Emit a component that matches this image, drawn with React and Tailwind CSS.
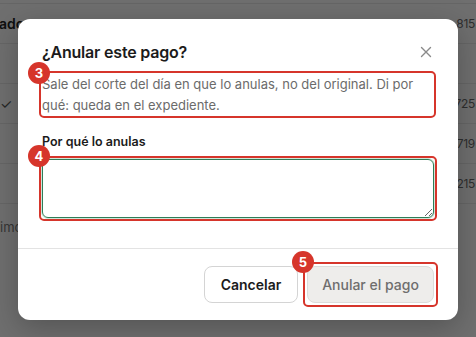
import React from "react";

const rows = [
  { left: "ado", right: "815", bold: true },
  { left: "", right: "" },
  { left: "✓", right: "725" },
  { left: "", right: "719" },
  { left: "", right: "215" },
];

const Badge = ({ n, className }) => (
  <span className={`absolute z-10 flex h-[22px] w-[22px] items-center justify-center rounded-full bg-[#d6352b] text-[13px] font-bold leading-none text-white ${className}`}>
    {n}
  </span>
);

const Mark = ({ n, children, box = "-inset-[3px]", badge = "-left-[14px] -top-[12px]" }) => (
  <div className="relative">
    {children}
    <div className={`pointer-events-none absolute ${box} rounded-[5px] border-2 border-[#d6352b]`} />
    <Badge n={n} className={badge} />
  </div>
);

export default function App() {
  return (
    <div className="relative h-[337px] w-[476px] overflow-hidden bg-[#f7f7f6] font-['Inter',sans-serif] text-[#1f1f1f]">
      {/* page behind the dialog */}
      <div className="flex flex-col pt-[3px]">
        <div className="h-0 border-t border-[#e2e2e2]" />
        {rows.map((r, i) => (
          <div key={i} className="flex h-10 items-center justify-between border-b border-[#e2e2e2] text-[14px]">
            <span className={`${r.bold ? "font-semibold text-[#222] -ml-px" : "text-[#555] ml-0"}`}>{r.left}</span>
            <span className="pr-px text-[12px] tracking-[-0.3px] text-[#666]">{r.right}</span>
          </div>
        ))}
        <div className="pt-[14px] text-[13px] text-[#777]">imo</div>
      </div>

      <div className="absolute inset-0 bg-[#000]/55" />

      {/* dialog */}
      <div className="absolute left-[18px] top-[19px] flex w-[440px] flex-col rounded-xl bg-white shadow-[0_8px_30px_rgba(0,0,0,0.25)]">
        <div className="px-6 pt-[21px] pb-[30px]">
          <div className="flex items-center justify-between">
            <h2 className="text-[16px] font-semibold leading-6 tracking-[-0.2px] text-[#1b1b1b]">¿Anular este pago?</h2>
            <svg width="12" height="12" viewBox="0 0 12 12" className="mr-[2px] text-[#8a8a8a]">
              <path d="M1.5 1.5l9 9M10.5 1.5l-9 9" stroke="currentColor" strokeWidth="1.4" strokeLinecap="round" />
            </svg>
          </div>

          <div className="mt-[10px]">
            <Mark n="3" box="-left-[3px] -right-[2px] -top-[3px] -bottom-[2px]">
              <p className="text-[13px] leading-[21px] text-[#6b6b6b]">
                Sale del corte del día en que lo anulas, no del original. Di por qué: queda en el expediente.
              </p>
            </Mark>
          </div>

          <label className="mt-[16px] block text-[12.5px] font-semibold leading-5 text-[#1b1b1b]">Por qué lo anulas</label>

          <div className="mt-[7px]">
            <Mark n="4" badge="-left-[14px] -top-[14px]">
              <textarea className="block h-[59px] w-full resize-y rounded-md border border-[#2f7d57] px-2 py-1 text-[13px] shadow-[0_0_0_1px_#cfe6d9] outline-none" />
            </Mark>
          </div>
        </div>

        <div className="flex justify-end gap-[9px] border-t border-[#e3e3e3] px-6 pt-[17px] pb-[17px]">
          <button className="h-[37px] w-[94px] rounded-lg border border-[#d4d4d4] bg-white text-[14px] font-semibold text-[#1b1b1b]">
            Cancelar
          </button>
          <Mark n="5" box="-inset-[4px]" badge="-left-[15px] -top-[15px]">
            <button className="h-[37px] w-[127px] rounded-lg border border-[#dcdcda] bg-[#eeedeb] text-[14px] font-medium text-[#6e6e6e]">
              Anular el pago
            </button>
          </Mark>
        </div>
      </div>
    </div>
  );
}
